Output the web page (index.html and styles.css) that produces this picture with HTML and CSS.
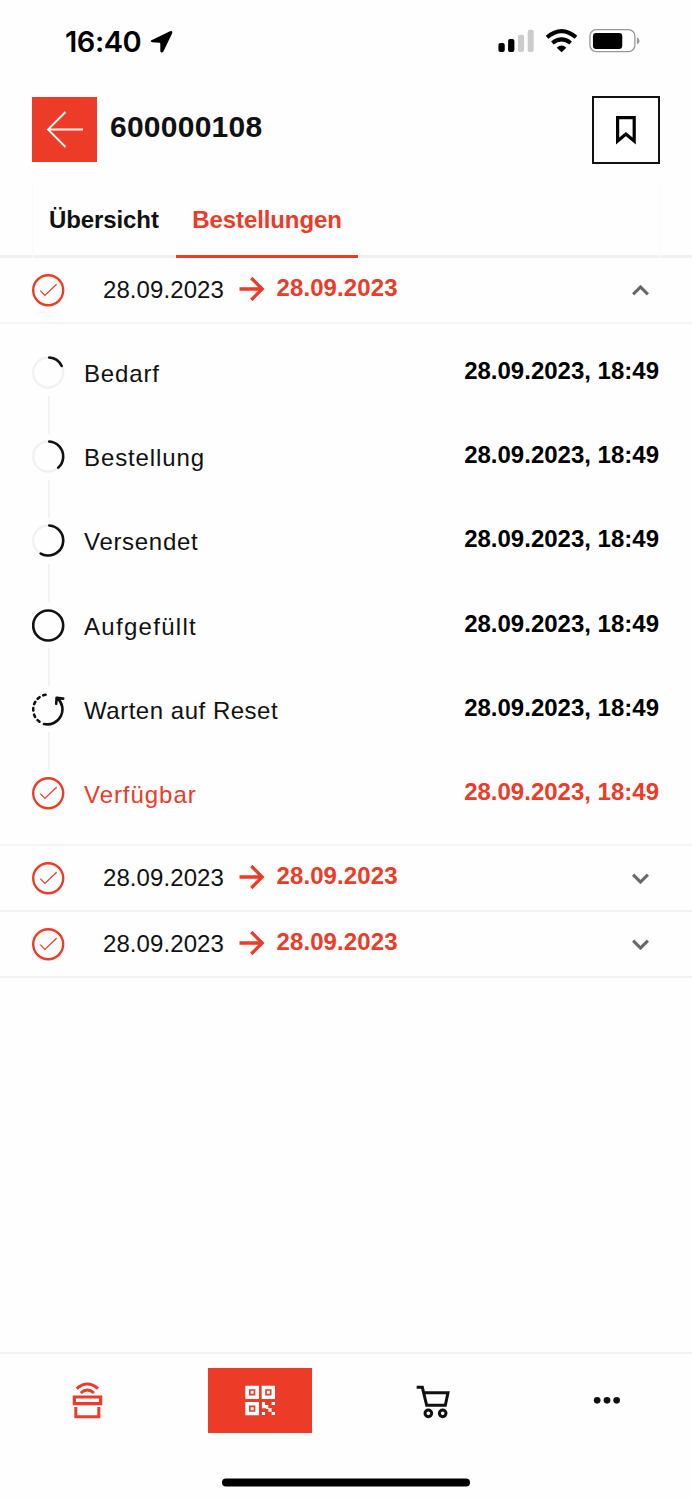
FILE: index.html
```html
<!DOCTYPE html>
<html lang="de">
<head>
<meta charset="utf-8">
<title>600000108</title>
<link rel="stylesheet" href="styles.css">
</head>
<body>
<svg class="defs" aria-hidden="true">
  <symbol id="check" viewBox="0 0 33 33"><circle cx="16.200" cy="16.200" r="15" stroke-width="2.400"/><path d="M8.300 16.600l4.600 4.900L24.600 10.200" stroke-width="1.200"/></symbol>
  <symbol id="arrow" viewBox="0 0 26 26"><path d="M.5 13H23M12.300 2L23.200 13 12.300 24" stroke-width="3.300"/></symbol>
  <symbol id="down" viewBox="0 0 24 24"><path d="M7.410 8.590L12 13.170l4.590-4.580L18 10l-6 6-6-6z"/></symbol>
</svg>
<div class="screen">
  <div class="status">
    <span class="time">16:40</span>
    <svg class="location" viewBox="328 60 70 70"><path d="M334 90L388 64Q396 60 395 69L369 123Q366 129 361 127Q359 126 359 122V101Q359 98 356 98L335 97Q330 96 330 93Q330 91 334 90Z"/></svg>
    <svg class="indicators" viewBox="54 54 430 76">
      <rect x="55" y="99" width="19" height="27" rx="6"/><rect x="84" y="87" width="19" height="39" rx="6"/>
      <g fill="#ccc"><rect x="114" y="74" width="18" height="52" rx="6"/><rect x="143" y="59" width="18" height="67" rx="6"/></g>
      <path d="M201 82Q245 45 288 82" fill="none" stroke="#000" stroke-width="12"/>
      <path d="M217 99Q245 77 272 99" fill="none" stroke="#000" stroke-width="12"/>
      <path d="M230 113Q245 100 259 113L245 127Z"/>
      <rect x="330" y="59" width="135" height="66" rx="19" fill="none" stroke="#999" stroke-width="4"/>
      <rect x="339" y="69" width="88" height="48" rx="10"/>
      <path d="M471 82Q479 85 479 93T471 103Z" fill="#999"/>
    </svg>
  </div>
  <header class="header">
    <button class="back"><svg viewBox="0 0 65 65"><path d="M51 32.500H16M33.500 15L16 32.500 33.500 50"/></svg></button>
    <h1 class="title">600000108</h1>
    <button class="bookmark"><svg viewBox="0 0 20 29"><path d="M1.600 1.600H18.200V25L9.900 18 1.600 25Z"/></svg></button>
  </header>
  <div class="tabbar">
    <nav class="tabs"><a class="tab">Übersicht</a><a class="tab tab-active">Bestellungen</a></nav>
  </div>
  <main class="orders">
    <div class="row"><svg class="check"><use href="#check"/></svg><span class="from">28.09.2023</span><svg class="arrow"><use href="#arrow"/></svg><b class="to">28.09.2023</b><svg class="chevron up"><use href="#down"/></svg></div>
    <ol class="steps">
      <li class="step"><div class="rail"><svg viewBox="0 0 33 33"><circle class="track" cx="16.200" cy="16.500" r="15"/><circle class="arc" cx="16.200" cy="16.500" r="15" pathLength="360" stroke-dasharray="60 300" transform="rotate(-86 16.200 16.500)"/></svg></div><span class="label bedarf">Bedarf</span><b class="when">28.09.2023, 18:49</b></li>
      <li class="step"><div class="rail"><svg viewBox="0 0 33 33"><circle class="track" cx="16.200" cy="16.500" r="15"/><circle class="arc" cx="16.200" cy="16.500" r="15" pathLength="360" stroke-dasharray="134 226" transform="rotate(-86 16.200 16.500)"/></svg></div><span class="label bestellung">Bestellung</span><b class="when">28.09.2023, 18:49</b></li>
      <li class="step"><div class="rail"><svg viewBox="0 0 33 33"><circle class="track" cx="16.200" cy="16.500" r="15"/><circle class="arc" cx="16.200" cy="16.500" r="15" pathLength="360" stroke-dasharray="206 154" transform="rotate(-86 16.200 16.500)"/></svg></div><span class="label versendet">Versendet</span><b class="when">28.09.2023, 18:49</b></li>
      <li class="step"><div class="rail"><svg viewBox="0 0 33 33"><circle class="arc" cx="16.200" cy="16.500" r="15"/></svg></div><span class="label filled">Aufgefüllt</span><b class="when">28.09.2023, 18:49</b></li>
      <li class="step"><div class="rail"><svg viewBox="0 0 33 33"><path class="arc" d="M25.200 5A15 15 0 0 1 12 31M24.200 10.800L24.600 4.900 31.200 5.600M24.700 5.200L27.400 7.400"/><circle class="arc" cx="16.200" cy="16.500" r="15" pathLength="360" stroke-dasharray="9 16 9 16 9 16 9 16 9 16 9 226" transform="rotate(126 16.200 16.500)"/></svg></div><span class="label reset">Warten auf Reset</span><b class="when">28.09.2023, 18:49</b></li>
      <li class="step done"><div class="rail"><svg class="check"><use href="#check"/></svg></div><span class="label ready">Verfügbar</span><b class="when">28.09.2023, 18:49</b></li>
    </ol>
    <div class="row"><svg class="check"><use href="#check"/></svg><span class="from">28.09.2023</span><svg class="arrow"><use href="#arrow"/></svg><b class="to">28.09.2023</b><svg class="chevron"><use href="#down"/></svg></div>
    <div class="row"><svg class="check"><use href="#check"/></svg><span class="from">28.09.2023</span><svg class="arrow"><use href="#arrow"/></svg><b class="to">28.09.2023</b><svg class="chevron"><use href="#down"/></svg></div>
  </main>
  <nav class="nav">
    <a class="item"><svg viewBox="0 0 312 195"><g transform="translate(46 -84)" fill="none" stroke="#ec3b26"><path d="M79 146Q111 118 143 146M91 159Q111 141 131 159" stroke-width="9"/><path d="M72 171H151V191H72Z" stroke-width="9.500"/><path d="M76.500 201V230.500H145.500V201" stroke-width="9"/></g></svg></a>
    <a class="item item-active"><svg viewBox="0 0 312 195"><g transform="translate(-474 -84)"><path fill="#fff" d="M586 137h41v40h-41zM635 137h40v40h-40zM586 186h41v40h-41zM636 186h9v9h-9zM665 186h10v9h-10zM636 195h19v10h-19zM645 205h10v0zM655 205h10v10h-10zM648 205h7v2h-7zM636 216h9v9h-9zM665 216h10v9h-10z"/><path fill="none" stroke="#ec3b26" stroke-width="5" d="M599.500 150h14v14h-14zM648 150h14v14h-14zM599.500 199h14v14h-14z"/></g></svg></a>
    <a class="item"><svg viewBox="0 0 312 195"><g transform="translate(26 -84)" fill="none" stroke="#111" stroke-width="9"><path d="M81 142H98L111 196H167L175 158H103"/><circle cx="116" cy="220" r="10"/><circle cx="159" cy="220" r="10"/></g></svg></a>
    <a class="item"><svg viewBox="0 0 312 195"><g transform="translate(-494 -84)" fill="#111"><circle cx="620.500" cy="181" r="10"/><circle cx="650" cy="181" r="10"/><circle cx="679" cy="181" r="10"/></g></svg></a>
  </nav>
  <div class="home"></div>
</div>
</body>
</html>
```
FILE: styles.css
```css
* { box-sizing: border-box; }
body { margin: 0; background: #fefefe; color: #111; font-family: "Liberation Sans", Arial, sans-serif; font-size: 24px; }
svg { display: block; flex: none; }
button { padding: 0; font: inherit; }
.defs { position: absolute; width: 0; height: 0; }
.screen { width: 692px; height: 1500px; display: flex; flex-direction: column; overflow: hidden; }

.status { height: 96px; padding: 28px 51px 0 65px; display: flex; align-items: flex-start; color: #000; }
.time { width: 84.500px; font: 600 29px/28px Inter, sans-serif; letter-spacing: -.450px; white-space: nowrap; }
.location { width: 23.300px; height: 23.300px; margin-top: 2px; }
.indicators { width: 143.300px; height: 25.300px; margin-left: auto; }

.header { height: 88px; padding: 0 32px; display: flex; align-items: flex-start; }
.back { width: 65px; height: 65px; margin-top: 1px; border: 0; background: #ec3b26; }
.back svg { width: 65px; fill: none; stroke: #fff; stroke-width: 1.800; }
.title { margin: 0 auto 0 13px; font-size: 30px; line-height: 61px; letter-spacing: .250px; }
.bookmark { width: 68px; height: 68px; border: 2px solid #111; background: #fff; display: grid; place-items: center; }
.bookmark svg { width: 20px; height: 29px; fill: none; stroke: #000; stroke-width: 3.200; }

.tabbar { height: 74px; padding: 0 32px; border-bottom: 3px solid #f1f1f1; }
.tabs { height: 74px; padding-left: 0; display: flex; border: 1px solid #fafafa; border-width: 0 1px; }
.tab { padding: 0 16px; line-height: 71px; font-weight: 700; letter-spacing: -.100px; border-bottom: 3px solid transparent; }
.tab-active { margin-left: 1.500px; color: #ec3b26; border-bottom-color: #ec3b26; }

.row { height: 66px; padding: 0 32px; border-bottom: 2px solid #f3f3f3; display: flex; align-items: center; }
.check { width: 33px; height: 33px; fill: none; stroke: #ec3b26; }
.from { margin-left: 38px; width: 120px; letter-spacing: .080px; }
.arrow { width: 26px; height: 26px; margin: -2px 12px 0 15.500px; fill: none; stroke: #ec3b26; }
.to { color: #ec3b26; line-height: 28px; padding-bottom: 5px; letter-spacing: .100px; }
.chevron { width: 33px; height: 33px; margin: 0 3px 0 auto; fill: #666; stroke: #666; stroke-width: .300; }
.up { transform: rotate(180deg); }

.steps { list-style: none; height: 522px; margin: 0; padding: 32px 33px 0 32px; border-bottom: 2px solid #f3f3f3; }
.step { height: 84.200px; display: flex; align-items: flex-start; }
.rail { width: 33px; height: 84.200px; margin-right: 19px; display: flex; flex-direction: column; align-items: center; gap: 6.500px; }
.rail svg { width: 33px; height: 33px; fill: none; }
.rail::after { content: ""; width: 2px; height: 38px; background: #f2f2f2; }
.done .rail::after { display: none; }
.track { stroke: #f1f1f1; stroke-width: 2.300; }
.arc { stroke: #111; stroke-width: 2.600; stroke-linecap: round; stroke-linejoin: round; }
.label { line-height: 35px; }
.when { margin-left: auto; line-height: 30px; color: #000; }
.done .label, .done .when { color: #ec3b26; }
.bedarf { letter-spacing: .850px; }
.bestellung { letter-spacing: .900px; }
.versendet { letter-spacing: .700px; }
.filled { letter-spacing: 1.300px; }
.reset { letter-spacing: .520px; }
.ready { letter-spacing: .950px; }

.nav { width: 693.300px; height: 126px; margin-top: auto; padding-top: 14px; border-top: 2px solid #f3f3f3; display: grid; grid-template-columns: repeat(4, 1fr); justify-items: center; }
.item { width: 104px; height: 65px; }
.item svg { width: 104px; height: 65px; }
.item-active { background: #ec3b26; }
.home { width: 248px; height: 8px; margin: 0 auto 14px; border-radius: 4px; background: #000; transform: translateY(.600px); }
```
